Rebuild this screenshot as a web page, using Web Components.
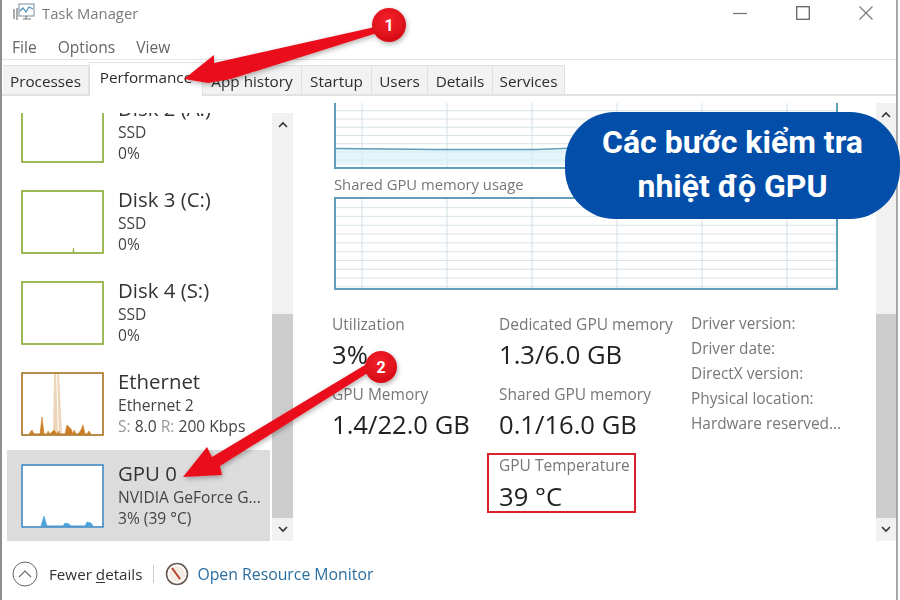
<!DOCTYPE html>
<html lang="vi">
<head>
<meta charset="utf-8">
<title>Task Manager</title>
<style>
  html, body { margin: 0; padding: 0; background: #fff; }
  body { width: 900px; height: 600px; overflow: hidden; position: relative; font-family: "Open Sans", "Noto Sans", sans-serif; color: #222; }
  #window { display: flex; flex-direction: column; width: 898px; height: 600px; box-sizing: border-box; border-left: 2px solid #8f8f8f; border-right: 2px solid #a8a8a8; filter: blur(0.5px); }
  #middle { display: flex; height: 457px; }
</style>
</head>
<body>
<div id="window">
  <title-bar></title-bar>
  <menu-bar></menu-bar>
  <tab-strip></tab-strip>
  <div id="middle">
    <side-list>
      <list-item name="Disk 2 (A:)" sub="SSD" val="0%" color="#86a92f"></list-item>
      <list-item name="Disk 3 (C:)" sub="SSD" val="0%" color="#86a92f" spark="M52 62 L52.5 58 L53 62Z"></list-item>
      <list-item name="Disk 4 (S:)" sub="SSD" val="0%" color="#86a92f"></list-item>
      <list-item name="Ethernet" sub="Ethernet 2" val="S: 8.0 R: 200 Kbps" color="#a9701d" fill="#cc7d24" spark="M8 62 L11 58 L13 62 L19 62 L21 45 L23 62 L26 62 L27 59 L29 62 L33 58 L36 62 L38 59 L38 62 L44 62 L46 53 L50 57 L52 62 L53 58 L55 62 L57 62 L60 58 L62 53 L64 62 L66 62 L68 59 L70 62 Z"></list-item>
      <list-item name="GPU 0" sub="NVIDIA GeForce G..." val="3% (39 °C)" color="#3c86c0" fill="#4aa3dc" selected spark="M20 62 L23 52 L26 62 L42 62 L44 59 L48 60 L50 62 L64 62 L66 58 L70 59 L72 62 Z"></list-item>
    </side-list>
    <scroll-bar class="left"></scroll-bar>
    <perf-pane></perf-pane>
    <scroll-bar class="right"></scroll-bar>
  </div>
  <foot-bar></foot-bar>
</div>
<call-out>Các bước kiểm tra<br>nhiệt độ GPU</call-out>
<step-arrows></step-arrows>

<script>
const FONT = '"Open Sans", "Noto Sans", sans-serif';

class TitleBar extends HTMLElement {
  constructor() {
    super();
    this.attachShadow({mode: 'open'}).innerHTML = `
      <style>
        :host { display: flex; align-items: center; height: 26px; padding-left: 11px; font: 14.8px ${FONT}; color: #7a7a7a; }
        .name { margin-left: 7px; }
        .btns { margin-left: auto; display: flex; gap: 49px; padding-right: 23px; }
      </style>
      <svg width="22" height="20" viewBox="0 0 22 20" fill="none" stroke="#6d7780" stroke-width="1.2">
        <rect x="6" y="1" width="15" height="12" stroke="#8aa0b0"/>
        <path d="M7 8 L10 5 L13 9 L16 4 L20 6" stroke="#4a8fc0"/>
        <path d="M1 6v10M4 5v12M10 16h8M13 13v3" stroke="#777"/>
      </svg>
      <span class="name">Task Manager</span>
      <div class="btns">
        <svg width="14" height="14" viewBox="0 0 14 14"><path d="M0 7.5h14" stroke="#777" stroke-width="1.3"/></svg>
        <svg width="14" height="14" viewBox="0 0 14 14"><rect x=".7" y=".7" width="12.6" height="12.6" fill="none" stroke="#666" stroke-width="1.3"/></svg>
        <svg width="14" height="14" viewBox="0 0 14 14"><path d="M.5.5l13 13M13.5.5l-13 13" stroke="#777" stroke-width="1.1"/></svg>
      </div>`;
  }
}

class MenuBar extends HTMLElement {
  constructor() {
    super();
    this.attachShadow({mode: 'open'}).innerHTML = `
      <style>
        :host { display: flex; align-items: center; gap: 21px; height: 34px; box-sizing: border-box; padding: 8px 0 0 10px; border-bottom: 1px solid #e4e4e4; font: 15.6px ${FONT}; color: #666; }
      </style>
      <span>File</span><span>Options</span><span>View</span>`;
  }
}

class TabStrip extends HTMLElement {
  constructor() {
    super();
    const tabs = [['Processes', 86], ['Performance', 114], ['App history', 99], ['Startup', 70], ['Users', 56], ['Details', 65], ['Services', 72]];
    this.attachShadow({mode: 'open'}).innerHTML = `
      <style>
        :host { display: flex; align-items: flex-end; height: 36px; box-sizing: border-box; padding-left: 1px; border-bottom: 2px solid #e2e2e2; font: 15.3px ${FONT}; color: #2c2c2c; }
        span { display: flex; align-items: center; justify-content: center; height: 29px; box-sizing: border-box; padding-top: 2px; background: #f2f2f2; border: 1px solid #e0e0e0; border-bottom: 0; border-left: 0; }
        span.on { background: #fff; padding: 0 0 5px; margin-bottom: -2px; height: 34px; border-left: 1px solid #e0e0e0; }
      </style>
      ${tabs.map(t => `<span class="${t[0] == 'Performance' ? 'on' : ''}" style="width:${t[1]}px">${t[0]}</span>`).join('')}`;
  }
}

class SideList extends HTMLElement {
  constructor() {
    super();
    this.attachShadow({mode: 'open'}).innerHTML = `
      <style>
        :host { display: flex; flex-direction: column; justify-content: flex-end; width: 263px; height: 428px; margin: 17px 2px 0 5px; overflow: hidden; }
      </style>
      <slot></slot>`;
  }
}

class ListItem extends HTMLElement {
  constructor() {
    super();
    this.attachShadow({mode: 'open'});
  }
  connectedCallback() {
    const color = this.getAttribute('color');
    const fill = this.getAttribute('fill') || color;
    const spark = this.getAttribute('spark');
    const name = this.getAttribute('name');
    const isEth = name == 'Ethernet';
    this.shadowRoot.innerHTML = `
      <style>
        :host { display: flex; flex: none; align-items: flex-start; gap: 14px; height: 91.3px; box-sizing: border-box; padding: 14px 0 0 14px; color: #333; }
        :host([selected]) { background: #dcdcdc; }
        svg { flex: none; background: #fff; display: block; }
        .t { font-size: 20.4px; line-height: 24px; margin: -3px 0 2px; color: #333; white-space: nowrap; }
        .s { font-size: 15.6px; line-height: 21px; white-space: nowrap; color: #444; }
        .s b { font-weight: 400; color: #999; }
      </style>
      <svg width="83" height="64" viewBox="0 0 83 64">
        ${isEth ? `<path d="M33 1 L35 1 L37 62 L32 62Z M36 1 L38 1 L41 62 L38 62Z" fill="#ecd5b8"/>` : ''}
        ${spark ? `<path d="${spark}" fill="${fill}" stroke="${fill}" stroke-width=".6"/>` : ''}
        <rect x="1" y="1" width="81" height="62" fill="none" stroke="${color}" stroke-width="1.6"/>
      </svg>
      <div>
        <div class="t">${name}</div>
        <div class="s">${this.getAttribute('sub')}</div>
        <div class="s">${isEth ? '<b>S:</b> 8.0 <b>R:</b> 200 Kbps' : this.getAttribute('val')}</div>
      </div>`;
  }
}

class ScrollBar extends HTMLElement {
  constructor() {
    super();
    this.attachShadow({mode: 'open'}).innerHTML = `
      <style>
        :host { display: flex; flex-direction: column; width: 21px; height: 428px; margin-top: 17px; background: #f1f1f1; }
        :host(.right) { width: 20px; height: 438px; margin-top: 7px; }
        .b { flex: none; height: 23px; display: flex; align-items: center; justify-content: center; }
        .gap { flex: 1; }
        .thumb { flex: none; height: 204px; background: #cdcdcd; }
      </style>
      <div class="b"><svg width="10" height="7" viewBox="0 0 10 7"><path d="M1 6l4-4 4 4" fill="none" stroke="#333" stroke-width="1.6"/></svg></div>
      <div class="gap"></div>
      <div class="thumb"></div>
      <div class="b"><svg width="10" height="7" viewBox="0 0 10 7"><path d="M1 1l4 4 4-4" fill="none" stroke="#333" stroke-width="1.6"/></svg></div>`;
  }
}

class PerfChart extends HTMLElement {
  constructor() {
    super();
    this.attachShadow({mode: 'open'});
  }
  connectedCallback() {
    const h = this.getAttribute('h');
    const cut = this.hasAttribute('cut');
    const hLines = [];
    for (let y = cut ? 8 : 9; y < h; y += cut ? 8.5 : 9.2) hLines.push(`<path d="M0 ${y}H504"/>`);
    const vLines = [];
    for (let x = 26; x < 504; x += 85) vLines.push(`<path d="M${x} 0V${h}"/>`);
    this.shadowRoot.innerHTML = `
      <style>
        :host { display: block; width: 504px; height: ${h}px; box-sizing: border-box; border: 2px solid #5f9db8; ${cut ? 'border-top: 0;' : ''} }
        svg { display: block; width: 100%; height: 100%; }
      </style>
      <svg viewBox="0 0 500 ${h}" preserveAspectRatio="none">
        <g stroke="#d6e3e9" stroke-width="1" fill="none">${hLines.join('')}</g>
        <g stroke="#d0dde3" stroke-width="1" fill="none">${vLines.join('')}</g>
        ${cut ? `<path d="M0 47 L100 48 L200 48 L250 46 L290 48 L350 47 L500 47 V64 H0Z" fill="#d8f1fb" opacity=".7"/>
        <path d="M0 47 L100 48 L200 48 L250 46 L290 48 L350 47 L500 47" fill="none" stroke="#5f9db8" stroke-width="1.5"/>` : ''}
      </svg>`;
  }
}

class StatBlock extends HTMLElement {
  constructor() {
    super();
    this.attachShadow({mode: 'open'}).innerHTML = `
      <style>
        :host { display: block; height: 70px; font-family: ${FONT}; }
        :host(.boxed) { height: 60px; box-sizing: border-box; margin: -1px 0 0 -12px; padding: 0 0 0 10px; width: 149px; border: 2px solid #d8222c; overflow: hidden; }
        .l { font-size: 15.5px; line-height: 20px; color: #777; white-space: nowrap; }
        .v { font-size: 25.6px; line-height: 32px; margin-top: 5px; color: #222; white-space: nowrap; }
        :host(.boxed) .v { margin-top: 6px; }
      </style>
      <div class="l"><slot name="label"></slot></div>
      <div class="v"><slot></slot></div>`;
  }
}

class PerfPane extends HTMLElement {
  constructor() {
    super();
    this.attachShadow({mode: 'open'}).innerHTML = `
      <style>
        :host { display: block; flex: 1; padding: 7px 0 0 39px; box-sizing: border-box; }
        perf-chart { margin-left: 2px; }
        .cap { height: 28px; margin-left: 2px; font-size: 14.8px; line-height: 30px; color: #777; white-space: nowrap; }
        .stats { display: grid; grid-template-columns: 167px 192px 1fr; margin-top: 24px; }
        .col3 { font-size: 15.4px; line-height: 25px; color: #777; margin-top: -3px; }
        .col3 div { white-space: nowrap; }
        .c1, .c2 { display: flex; flex-direction: column; }
      </style>
      <perf-chart h="66" cut></perf-chart>
      <div class="cap">Shared GPU memory usage</div>
      <perf-chart h="93"></perf-chart>
      <div class="stats">
        <div class="c1">
          <stat-block><span slot="label">Utilization</span>3%</stat-block>
          <stat-block><span slot="label">GPU Memory</span>1.4/22.0 GB</stat-block>
        </div>
        <div class="c2">
          <stat-block><span slot="label">Dedicated GPU memory</span>1.3/6.0 GB</stat-block>
          <stat-block><span slot="label">Shared GPU memory</span>0.1/16.0 GB</stat-block>
          <stat-block class="boxed"><span slot="label">GPU Temperature</span>39 °C</stat-block>
        </div>
        <div class="col3">
          <div>Driver version:</div>
          <div>Driver date:</div>
          <div>DirectX version:</div>
          <div>Physical location:</div>
          <div>Hardware reserved...</div>
        </div>
      </div>`;
  }
}

class FootBar extends HTMLElement {
  constructor() {
    super();
    this.attachShadow({mode: 'open'}).innerHTML = `
      <style>
        :host { display: flex; align-items: center; height: 47px; box-sizing: border-box; padding: 0 0 6px 10px; font: 15.2px ${FONT}; color: #333; }
        .sep { width: 1px; height: 18px; background: #ccc; margin: 0 11px; }
        .fewer { margin-left: 11px; }
        u { text-underline-offset: 2px; }
        a { color: #2a6ea0; margin-left: 8px; text-decoration: none; font-size: 15.8px; }
      </style>
      <svg width="26" height="26" viewBox="0 0 26 26" fill="none">
        <circle cx="13" cy="13" r="12" stroke="#666" stroke-width="1"/>
        <path d="M7 16l6-6 6 6" stroke="#666" stroke-width="1.1"/>
      </svg>
      <span class="fewer">Fewer <u>d</u>etails</span>
      <span class="sep"></span>
      <svg width="24" height="24" viewBox="0 0 24 24" fill="none">
        <circle cx="12" cy="12" r="10.5" stroke="#6b5a50" stroke-width="1.6"/>
        <circle cx="12" cy="12" r="8" fill="#f4ece2"/>
        <path d="M7 6L15 17" stroke="#b8402a" stroke-width="2"/>
      </svg>
      <a>Open Resource Monitor</a>`;
  }
}

class CallOut extends HTMLElement {
  constructor() {
    super();
    this.attachShadow({mode: 'open'}).innerHTML = `
      <style>
        :host { position: absolute; left: 565px; top: 112px; width: 335px; height: 107px; box-sizing: border-box; padding-bottom: 4px; display: flex; align-items: center; justify-content: center; text-align: center; background: #034ea8; border-radius: 50px; color: #fff; font: 700 32px/44px Roboto, sans-serif; }
      </style>
      <div><slot></slot></div>`;
  }
}

class StepArrows extends HTMLElement {
  constructor() {
    super();
    this.attachShadow({mode: 'open'}).innerHTML = `
      <style>
        :host { position: absolute; left: 0; top: 0; width: 900px; height: 600px; pointer-events: none; }
        svg { display: block; }
        text { font: 700 16px Roboto, sans-serif; fill: #fff; text-anchor: middle; }
      </style>
      <svg width="900" height="600" viewBox="0 0 900 600">
        <defs>
          <filter id="sh" x="-20%" y="-40%" width="140%" height="180%"><feDropShadow dx="1" dy="2" stdDeviation="2.5" flood-color="#000" flood-opacity=".3"/></filter>
          <radialGradient id="ball" cx="45%" cy="35%" r="70%"><stop offset="0" stop-color="#f5202a"/><stop offset="1" stop-color="#d30b14"/></radialGradient>
        </defs>
        <g filter="url(#sh)">
          <path d="M184 79 L214 55 L214 63 L375 27 L377 33 L231 79 L208 83 Z" fill="#ea0f1a"/>
          <circle cx="389" cy="25" r="17" fill="url(#ball)"/>
          <path d="M183 477 L207 447 L212 457 L370 362 L374 369 L220 466 L222 475 Z" fill="#ea0f1a"/>
          <circle cx="381" cy="367" r="16" fill="url(#ball)"/>
        </g>
        <text x="389" y="31">1</text>
        <text x="381" y="373">2</text>
      </svg>`;
  }
}

window.customElements.define('title-bar', TitleBar);
window.customElements.define('menu-bar', MenuBar);
window.customElements.define('tab-strip', TabStrip);
window.customElements.define('side-list', SideList);
window.customElements.define('list-item', ListItem);
window.customElements.define('scroll-bar', ScrollBar);
window.customElements.define('perf-chart', PerfChart);
window.customElements.define('stat-block', StatBlock);
window.customElements.define('perf-pane', PerfPane);
window.customElements.define('foot-bar', FootBar);
window.customElements.define('call-out', CallOut);
window.customElements.define('step-arrows', StepArrows);
</script>
</body>
</html>
